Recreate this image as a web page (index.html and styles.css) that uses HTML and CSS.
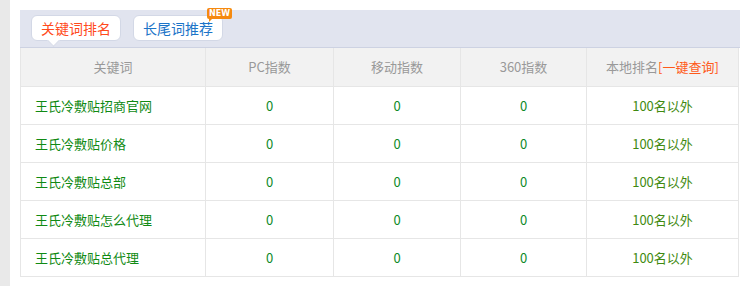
FILE: index.html
```html
<!DOCTYPE html>
<html lang="zh">
<head>
<meta charset="utf-8">
<link rel="stylesheet" href="styles.css">
</head>
<body>
<div class="page">
  <div class="strip"></div>
  <div class="main">
    <div class="band">
      <div class="tab tab-active">关键词排名<span class="arrow"></span></div>
      <div class="tab tab-blue">长尾词推荐<span class="badge">NEW</span></div>
    </div>
    <table class="kw">
      <colgroup>
        <col class="c1"><col class="c2"><col class="c3"><col class="c4"><col class="c5">
      </colgroup>
      <thead>
        <tr><th>关键词</th><th>PC指数</th><th>移动指数</th><th>360指数</th><th>本地排名<span class="link">[一键查询]</span></th></tr>
      </thead>
      <tbody>
        <tr><td class="name">王氏冷敷贴招商官网</td><td>0</td><td>0</td><td>0</td><td class="rank">100名以外</td></tr>
        <tr><td class="name">王氏冷敷贴价格</td><td>0</td><td>0</td><td>0</td><td class="rank">100名以外</td></tr>
        <tr><td class="name">王氏冷敷贴总部</td><td>0</td><td>0</td><td>0</td><td class="rank">100名以外</td></tr>
        <tr><td class="name">王氏冷敷贴怎么代理</td><td>0</td><td>0</td><td>0</td><td class="rank">100名以外</td></tr>
        <tr><td class="name">王氏冷敷贴总代理</td><td>0</td><td>0</td><td>0</td><td class="rank">100名以外</td></tr>
      </tbody>
    </table>
  </div>
</div>
</body>
</html>
```

FILE: styles.css
```css
html, body {
  margin: 0;
  padding: 0;
  background: #fff;
  font-family: "Noto Sans CJK SC", "Noto Sans", sans-serif;
}
.page {
  display: flex;
  width: 740px;
  height: 286px;
  overflow: hidden;
}
.strip {
  width: 10px;
  flex: none;
  background: #e9e9e9;
}
.main {
  flex: 1;
  padding: 10px 0 0 10px;
}
.band {
  height: 38px;
  background: #e1e4ef;
  border-bottom: 1px solid #cdd2e2;
  box-sizing: border-box;
  display: flex;
  align-items: flex-start;
  gap: 12px;
  padding: 5px 0 0 11px;
}
.tab {
  position: relative;
  width: 90px;
  height: 26px;
  box-sizing: border-box;
  background: #fff;
  border: 1px solid #d3d8e6;
  border-radius: 6px;
  font-size: 14px;
  line-height: 24px;
  text-align: center;
}
.tab-active { color: #ff4a1c; }
.tab-blue { color: #1c74c8; }
.arrow {
  position: absolute;
  left: 17px;
  bottom: -5px;
  width: 8px;
  height: 8px;
  background: #fff;
  border-right: 1px solid #d3d8e6;
  border-bottom: 1px solid #d3d8e6;
  transform: rotate(45deg);
}
.badge {
  position: absolute;
  left: 73px;
  top: -8px;
  width: 25px;
  height: 11px;
  background: #f5890f;
  border-radius: 2px;
  color: #fff;
  font-family: "DejaVu Sans", sans-serif;
  font-weight: bold;
  font-size: 8px;
  line-height: 11px;
  text-align: center;
}
.badge::after {
  content: "";
  position: absolute;
  left: 2px;
  bottom: -3px;
  border-left: 3px solid #f5890f;
  border-right: 3px solid transparent;
  border-bottom: 3px solid transparent;
}
.kw {
  width: 718px;
  border-collapse: collapse;
  table-layout: fixed;
  font-size: 13px;
}
.c1 { width: 185px; }
.c2 { width: 128px; }
.c3 { width: 127px; }
.c4 { width: 126px; }
.c5 { width: 152px; }
.kw th, .kw td {
  border: 1px solid #e6e6e6;
  padding: 0;
  text-align: center;
  box-sizing: border-box;
}
.kw thead th {
  border-top: none;
  background: #f2f2f2;
  color: #999;
  font-weight: normal;
  height: 38px;
}
.kw td {
  color: #0e8a28;
  height: 38px;
}
.kw td.name {
  text-align: left;
  padding-left: 14px;
  color: #108a14;
}
.kw td.rank { color: #3f8a10; }
.link { color: #ff5a1a; }
```
